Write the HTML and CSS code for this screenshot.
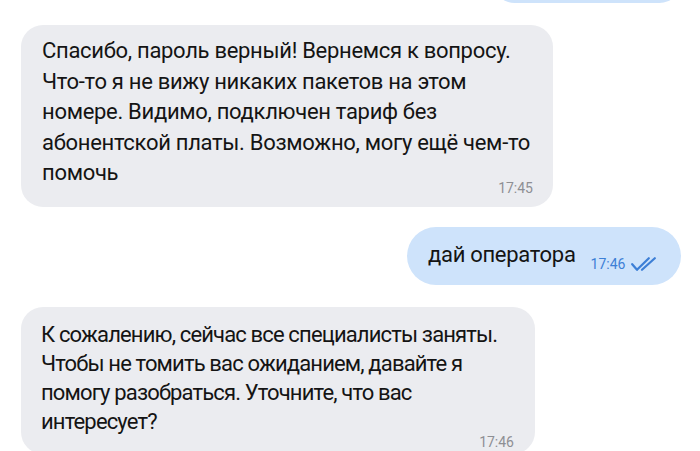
FILE: index.html
```html
<!DOCTYPE html>
<html lang="ru">
<head>
<meta charset="utf-8">
<link rel="stylesheet" href="styles.css">
</head>
<body>
<div class="chat">
  <div class="row out">
    <div class="bubble out-bubble stub"></div>
  </div>
  <div class="row in">
    <div class="bubble in-bubble b1">
      <p class="text">Спасибо, пароль верный! Вернемся к вопросу.<br>Что-то я не вижу никаких пакетов на этом<br>номере. Видимо, подключен тариф без<br>абонентской платы. Возможно, могу ещё чем-то<br>помочь</p>
      <span class="time">17:45</span>
    </div>
  </div>
  <div class="row out">
    <div class="bubble out-bubble b2">
      <span class="text">дай оператора</span>
      <span class="time blue">17:46</span>
      <svg class="ticks" width="25" height="14" viewBox="0 0 25 14"><path d="M1.2 7.2 L6 12.8 L17.8 1.2 M11 12.8 L23.8 1.2" fill="none" stroke="#3d7fd6" stroke-width="2.2" stroke-linecap="round" stroke-linejoin="round"/></svg>
    </div>
  </div>
  <div class="row in">
    <div class="bubble in-bubble b3">
      <p class="text">К сожалению, сейчас все специалисты заняты.<br>Чтобы не томить вас ожиданием, давайте я<br>помогу разобраться. Уточните, что вас<br>интересует?</p>
      <span class="time">17:46</span>
    </div>
  </div>
</div>
</body>
</html>
```
FILE: styles.css
```css
html, body {
  margin: 0;
  padding: 0;
  background: #ffffff;
  overflow: hidden;
}
body {
  width: 700px;
  height: 451px;
  font-family: Roboto, "Noto Sans", sans-serif;
  color: #141414;
}
.chat {
  display: flex;
  flex-direction: column;
  margin-top: -40px;
  height: 491px;
  overflow: hidden;
}
.row {
  display: flex;
  flex-shrink: 0;
}
.row.in {
  justify-content: flex-start;
  padding-left: 21px;
}
.row.out {
  justify-content: flex-end;
  padding-right: 19px;
}
.bubble {
  box-sizing: border-box;
}
.in-bubble {
  background: #ebecf0;
  border-radius: 22px;
  position: relative;
}
.out-bubble {
  background: #cee3fb;
  border-radius: 29px;
}
.stub {
  width: 188px;
  height: 43px;
}
.b1 {
  margin-top: 22px;
  width: 532px;
  height: 182px;
  padding: 11px 20px 0 21px;
}
.b1 .text {
  line-height: 30.5px;
}
.b3 {
  margin-top: 22px;
  width: 514px;
  height: 147px;
  padding: 13px 20px 0 20px;
}
.b3 .text {
  line-height: 29px;
  letter-spacing: -0.85px;
}
.text {
  margin: 0;
  font-size: 22px;
  line-height: 30px;
  letter-spacing: -0.3px;
  white-space: nowrap;
}
.time {
  font-size: 14px;
  line-height: 16px;
  color: #8e8f94;
}
.b1 .time {
  position: absolute;
  right: 20px;
  bottom: 11px;
}
.b3 .time {
  position: absolute;
  right: 21px;
  top: 127px;
}
.b2 {
  margin-top: 20px;
  height: 58px;
  width: 274px;
  display: flex;
  align-items: flex-start;
  padding: 13px 22px 0 21px;
}
.time.blue {
  color: #3d7fd6;
  margin-left: 15px;
  margin-top: 16px;
}
.ticks {
  margin-left: 6px;
  margin-top: 17px;
}
```
